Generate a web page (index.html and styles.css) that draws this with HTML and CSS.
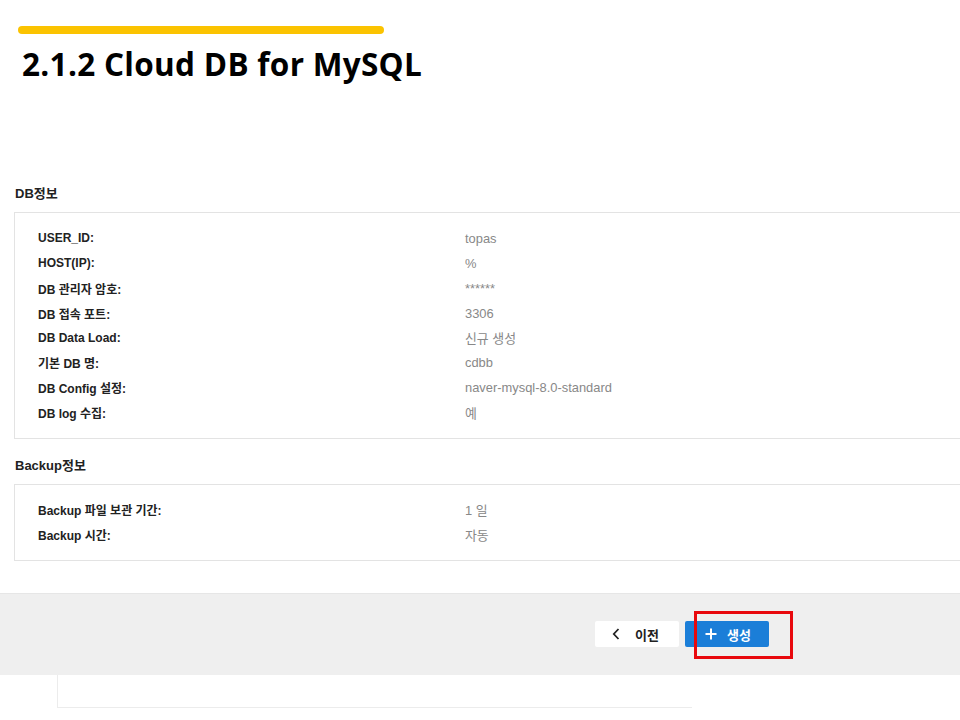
FILE: index.html
```html
<!DOCTYPE html>
<html lang="ko">
<head>
<meta charset="utf-8">
<title>2.1.2 Cloud DB for MySQL</title>
<link rel="stylesheet" href="styles.css">
</head>
<body>
<header class="slide-head">
  <div class="accent-bar"></div>
  <h1 class="slide-title">2.1.2 Cloud DB for MySQL</h1>
</header>

<main class="content">
  <section class="info-section">
    <h2 class="section-title">DB정보</h2>
    <div class="card">
      <dl class="info-grid">
        <dt>USER_ID:</dt><dd>topas</dd>
        <dt>HOST(IP):</dt><dd>%</dd>
        <dt>DB 관리자 암호:</dt><dd>******</dd>
        <dt>DB 접속 포트:</dt><dd>3306</dd>
        <dt>DB Data Load:</dt><dd>신규 생성</dd>
        <dt>기본 DB 명:</dt><dd>cdbb</dd>
        <dt>DB Config 설정:</dt><dd>naver-mysql-8.0-standard</dd>
        <dt>DB log 수집:</dt><dd>예</dd>
      </dl>
    </div>
  </section>

  <section class="info-section backup">
    <h2 class="section-title">Backup정보</h2>
    <div class="card card-backup">
      <dl class="info-grid">
        <dt>Backup 파일 보관 기간:</dt><dd>1 일</dd>
        <dt>Backup 시간:</dt><dd>자동</dd>
      </dl>
    </div>
  </section>
</main>

<footer class="action-bar">
  <div class="btn btn-prev" role="button">
    <svg class="icon icon-prev" width="8" height="12" viewBox="0 0 8 12"><path d="M6.5 1 L1.8 6 L6.5 11" fill="none" stroke="#222" stroke-width="1.8"/></svg>
    <span class="btn-label">이전</span>
  </div>
  <div class="btn btn-create" role="button">
    <svg class="icon icon-plus" width="12" height="12" viewBox="0 0 12 12"><path d="M6 0.5 V11.5 M0.5 6 H11.5" fill="none" stroke="#fff" stroke-width="2"/></svg>
    <span class="btn-label">생성</span>
    <span class="highlight"></span>
  </div>
</footer>
<div class="below-box"></div>
</body>
</html>
```

FILE: styles.css
```css
* { box-sizing: border-box; }
html, body {
  margin: 0;
  padding: 0;
  background: #ffffff;
  width: 960px;
  height: 720px;
  overflow: hidden;
}
body {
  font-family: "Liberation Sans", Arial, "Noto Sans CJK KR", sans-serif;
  color: #222;
}

.slide-head {
  padding-top: 26px;
}
.accent-bar {
  margin-left: 18px;
  width: 366px;
  height: 8px;
  border-radius: 4px;
  background: #fbc300;
}
.slide-title {
  margin: 8px 0 0 22px;
  font-family: "Open Sans", "Noto Sans CJK KR", sans-serif;
  font-weight: 700;
  font-size: 31.5px;
  line-height: 44px;
  color: #000;
  letter-spacing: 0.3px;
}

.content {
  padding-top: 100px;
}
.info-section {
  padding-left: 14px;
}
.section-title {
  margin: 0 0 10px 1px;
  font-size: 13px;
  line-height: 16px;
  font-weight: 700;
  color: #222;
}
.backup {
  margin-top: 19px;
}
.card {
  border: 1px solid #e3e3e3;
  border-right: none;
  background: #fff;
  padding: 13px 0 13px 23px;
  margin-right: -2px;
}
.card-backup {
  padding: 12px 0 13px 23px;
}
.info-grid {
  margin: 0;
  display: grid;
  grid-template-columns: 427px 1fr;
  grid-auto-rows: 24.86px;
  align-items: center;
}
.info-grid dt {
  font-size: 12px;
  font-weight: 700;
  color: #222;
}
.info-grid dd {
  margin: 0;
  font-size: 12.9px;
  color: #888;
}

.action-bar {
  margin-top: 32px;
  height: 82px;
  background: #efefef;
  border-top: 1px solid #e6e6e6;
  display: flex;
  align-items: center;
  justify-content: flex-end;
  gap: 6px;
  padding-right: 191px;
}
.btn {
  position: relative;
  height: 26px;
  width: 84px;
  border-radius: 2px;
  font-size: 13px;
  font-weight: 700;
  display: flex;
  align-items: center;
  justify-content: flex-start;
}
.btn-prev {
  background: #fff;
  color: #222;
  padding-left: 17px;
}
.btn-prev .icon {
  margin-right: 15px;
}
.btn-create {
  background: #1b7ed8;
  color: #fff;
  padding-left: 20px;
}
.btn-create .icon {
  margin-right: 10px;
}
.highlight {
  position: absolute;
  left: 9px;
  top: -10px;
  width: 99px;
  height: 48px;
  border: 3.5px solid #e8080d;
}

.below-box {
  margin-left: 57px;
  width: 635px;
  height: 33px;
  border-left: 1px solid #ececec;
  border-bottom: 1px solid #ececec;
}
```
